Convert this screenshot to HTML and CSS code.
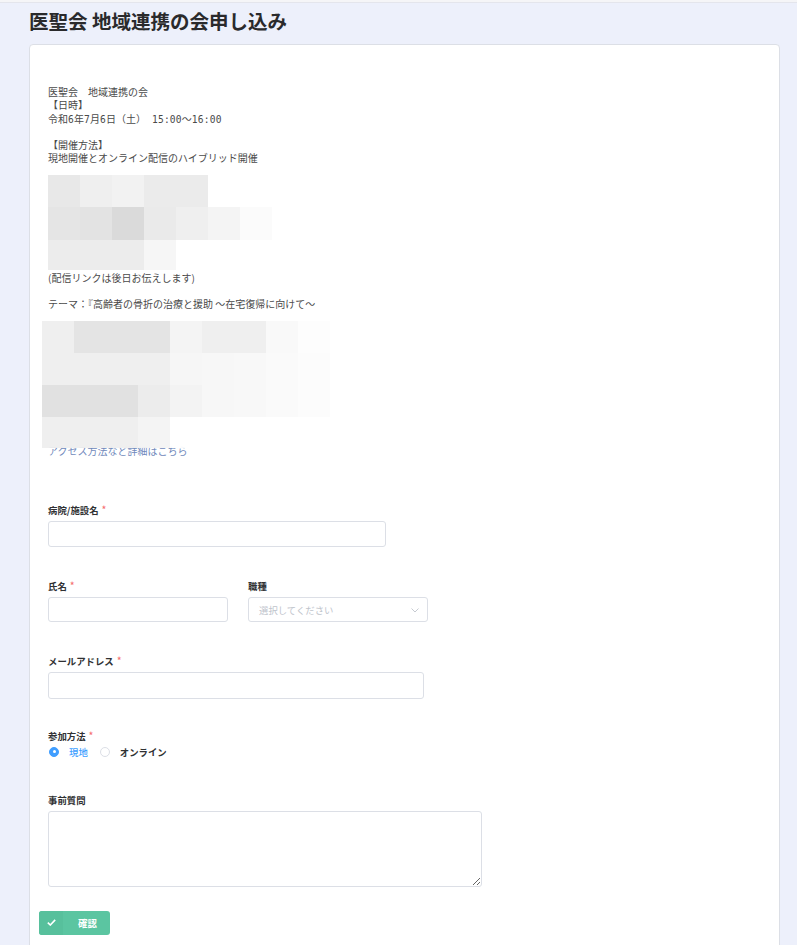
FILE: index.html
```html
<!DOCTYPE html>
<html lang="ja">
<head>
<meta charset="utf-8">
<title>医聖会 地域連携の会申し込み</title>
<link rel="stylesheet" href="styles.css">
</head>
<body>
<div class="topline"></div>
<header class="header">
  <h1 class="title">医聖会 地域連携の会申し込み</h1>
</header>
<main class="card">
  <div class="desc">
    <p class="line">医聖会　地域連携の会</p>
    <p class="line">【日時】</p>
    <p class="line">令和<span class="num">6</span>年<span class="num">7</span>月<span class="num">6</span>日（土）<span class="num"> 15:00</span>～<span class="num">16:00</span></p>
    <p class="line blank"></p>
    <p class="line">【開催方法】</p>
    <p class="line">現地開催とオンライン配信のハイブリッド開催</p>
    <div class="mosaic mosaic-a">
      <i class="k8"></i><i class="kf"></i><i class="kf2"></i><i class="kb"></i><i class="kb"></i><i class="kw"></i><i class="kw"></i>
      <i class="k5"></i><i class="k3"></i><i class="ka"></i><i class="ke"></i><i class="kf"></i><i class="k4"></i><i class="kfb"></i>
      <i class="kc"></i><i class="kc"></i><i class="kc"></i><i class="k6"></i><i class="kw"></i><i class="kw"></i><i class="kw"></i>
    </div>
    <p class="line">(配信リンクは後日お伝えします)</p>
    <p class="line blank"></p>
    <p class="line">テーマ：『高齢者の骨折の治療と援助 ～在宅復帰に向けて～</p>
    <div class="mosaic mosaic-b">
      <i class="kf"></i><i class="k3"></i><i class="k3"></i><i class="k3"></i><i class="k4"></i><i class="kf"></i><i class="kf"></i><i class="k9"></i><i class="kfd"></i>
      <i class="kf"></i><i class="kf"></i><i class="kf"></i><i class="kf"></i><i class="k6"></i><i class="k7"></i><i class="k8b"></i><i class="kfa"></i><i class="kfc"></i>
      <i class="k0"></i><i class="k0"></i><i class="k0"></i><i class="kbb"></i><i class="kf3"></i><i class="k7"></i><i class="k8b"></i><i class="kfa"></i><i class="kfc"></i>
      <i class="kf"></i><i class="kf"></i><i class="kf"></i><i class="k4"></i><i class="kw"></i><i class="kw"></i><i class="kw"></i><i class="kw"></i><i class="kw"></i>
    </div>
    <p class="line"><a class="link" href="#">アクセス方法など詳細はこちら</a></p>
  </div>

  <form class="form">
    <div class="item">
      <label class="label">病院/施設名<span class="req">*</span></label>
      <input class="input w-hospital" type="text">
    </div>

    <div class="item row">
      <div class="col">
        <label class="label">氏名<span class="req">*</span></label>
        <input class="input input-sm w-half" type="text">
      </div>
      <div class="col">
        <label class="label">職種</label>
        <div class="select input-sm w-half">
          <span class="placeholder">選択してください</span>
          <svg class="chev" width="8" height="5" viewBox="0 0 8 5"><path d="M0.5 0.5 L4 4 L7.5 0.5" fill="none" stroke="#c0c4cc" stroke-width="0.9"/></svg>
        </div>
      </div>
    </div>

    <div class="item item-mail">
      <label class="label">メールアドレス<span class="req">*</span></label>
      <input class="input w-mail" type="text">
    </div>

    <div class="item item-radio">
      <label class="label">参加方法<span class="req">*</span></label>
      <div class="radios">
        <span class="radio checked"><span class="dot"></span><span class="rtext">現地</span></span>
        <span class="radio"><span class="dot"></span><span class="rtext">オンライン</span></span>
      </div>
    </div>

    <div class="item item-text">
      <label class="label">事前質問</label>
      <textarea class="textarea"></textarea>
    </div>

    <button class="btn" type="button">
      <span class="btn-icon"><svg width="9" height="7" viewBox="0 0 9 7"><path d="M0.8 3.6 L3.3 6 L8.2 0.9" fill="none" stroke="#fff" stroke-width="1.6"/></svg></span>
      <span class="btn-text">確認</span>
    </button>
  </form>
</main>
</body>
</html>
```

FILE: styles.css
```css
* { box-sizing: border-box; }

html, body {
  margin: 0;
  padding: 0;
}

body {
  background: #edf0fb;
  font-family: "Noto Sans CJK JP", "Noto Sans", sans-serif;
  color: #303133;
  min-height: 945px;
}

.topline {
  height: 3px;
  background: #f5f5f7;
  border-bottom: 1px solid #e4e5ec;
}

.header {
  height: 41px;
  padding-left: 29px;
}

.title {
  margin: 0;
  font-size: 19.5px;
  line-height: 36px;
  font-weight: 700;
  color: #2a2a2c;
}

.card {
  margin-left: 29px;
  width: 751px;
  background: #fff;
  border: 1px solid #dcdfe6;
  border-radius: 4px 4px 0 0;
  padding: 40px 18px 40px 18px;
  min-height: 920px;
}

.desc {
  font-size: 10px;
  line-height: 13.3px;
  color: #4a4a4a;
}

.line {
  margin: 0;
  height: 13.3px;
  white-space: nowrap;
}

.num {
  font-family: "DejaVu Sans Mono", "Noto Sans CJK JP", monospace;
  font-size: 9.6px;
  letter-spacing: 0.2px;
}

.mosaic {
  display: grid;
  filter: blur(0.6px);
}

.mosaic i { display: block; }

.mosaic-a {
  grid-template-columns: repeat(7, 32px);
  grid-template-rows: 32px 33px 30px;
  margin-top: 10.4px;
  margin-bottom: 0.7px;
}

.mosaic-b {
  grid-template-columns: repeat(9, 32px);
  grid-template-rows: 32px 32px 32px 31px;
  margin-left: -6px;
  margin-top: 10.5px;
  margin-bottom: -4.5px;
  position: relative;
  z-index: 1;
  opacity: 0.95;
}

.k0 { background: #e0e0e0; }
.k3 { background: #e3e3e3; }
.k4 { background: #f4f4f4; }
.k5 { background: #e5e5e5; }
.k6 { background: #f6f6f6; }
.k7 { background: #f7f7f7; }
.k8 { background: #e8e8e8; }
.k8b { background: #f8f8f8; }
.k9 { background: #f9f9f9; }
.ka { background: #dadada; }
.kb { background: #ebebeb; }
.kbb { background: #ebebeb; }
.kc { background: #ececec; }
.ke { background: #eaeaea; }
.kf { background: #efefef; }
.kf2 { background: #f2f2f2; }
.kf3 { background: #f3f3f3; }
.kfa { background: #fafafa; }
.kfb { background: #fbfbfb; }
.kfc { background: #fcfcfc; }
.kfd { background: #fdfdfd; }
.kw { background: #ffffff; }

.link {
  color: #6f88bb;
  text-decoration: none;
}

.form {
  margin-top: 45.5px;
  display: flex;
  flex-direction: column;
}

.item {
  display: flex;
  flex-direction: column;
  margin-bottom: 32px;
}

.item-mail { margin-bottom: 30px; }

.row {
  flex-direction: row;
  gap: 20px;
}

.col {
  display: flex;
  flex-direction: column;
}

.label {
  font-size: 9.4px;
  line-height: 14px;
  font-weight: 700;
  color: #303133;
  margin-bottom: 4px;
  white-space: nowrap;
}

.req {
  color: #f56c6c;
  margin-left: 3px;
  font-weight: 400;
  font-size: 10.5px;
}

.input {
  display: block;
  height: 26.5px;
  border: 1px solid #dcdfe6;
  border-radius: 3px;
  background: #fff;
  padding: 0 8px;
  font: inherit;
  outline: none;
}

.input-sm { height: 25px; }

.w-hospital { width: 338px; }
.w-half { width: 180px; }
.w-mail { width: 376px; }

.select {
  border: 1px solid #dcdfe6;
  border-radius: 3px;
  display: flex;
  align-items: center;
  justify-content: space-between;
  padding: 0 8px 0 10px;
}

.placeholder {
  font-size: 9.4px;
  color: #c0c4cc;
}

.chev { display: block; margin-top: 1px; }

.item-radio { margin-bottom: 34px; }
.item-radio .label { margin-bottom: 2px; }

.radios {
  display: flex;
  align-items: center;
  height: 14px;
  padding-left: 1px;
}

.radio {
  display: flex;
  align-items: center;
  font-size: 9.4px;
  font-weight: 700;
  color: #303133;
  margin-right: 12px;
}

.dot {
  width: 10px;
  height: 10px;
  border-radius: 50%;
  border: 1px solid #dcdfe6;
  background: #fff;
  margin-right: 10px;
  position: relative;
}

.radio.checked .dot {
  background: #409eff;
  border-color: #409eff;
}

.radio.checked .dot::after {
  content: "";
  position: absolute;
  left: 50%;
  top: 50%;
  width: 3px;
  height: 3px;
  margin: -1.5px 0 0 -1.5px;
  border-radius: 50%;
  background: #fff;
}

.radio.checked .rtext {
  color: #409eff;
  font-weight: 500;
}

.item-text { margin-bottom: 24px; }

.textarea {
  display: block;
  width: 434px;
  height: 76px;
  border: 1px solid #dcdfe6;
  border-radius: 3px;
  font: inherit;
  outline: none;
  padding: 4px 8px;
}

.btn {
  margin-left: -9px;
  width: 71px;
  height: 24px;
  border: none;
  border-radius: 3px;
  background: #5bc5a1;
  display: flex;
  align-items: center;
  padding: 0;
  cursor: pointer;
  font-family: inherit;
}

.btn-icon {
  width: 24px;
  height: 24px;
  display: flex;
  align-items: center;
  justify-content: center;
  background: #57c09c;
  border-radius: 3px 0 0 3px;
}

.btn-text {
  flex: 1;
  text-align: center;
  color: #fff;
  font-size: 9.4px;
  font-weight: 700;
  padding-right: 0;
  padding-left: 2px;
}
```
